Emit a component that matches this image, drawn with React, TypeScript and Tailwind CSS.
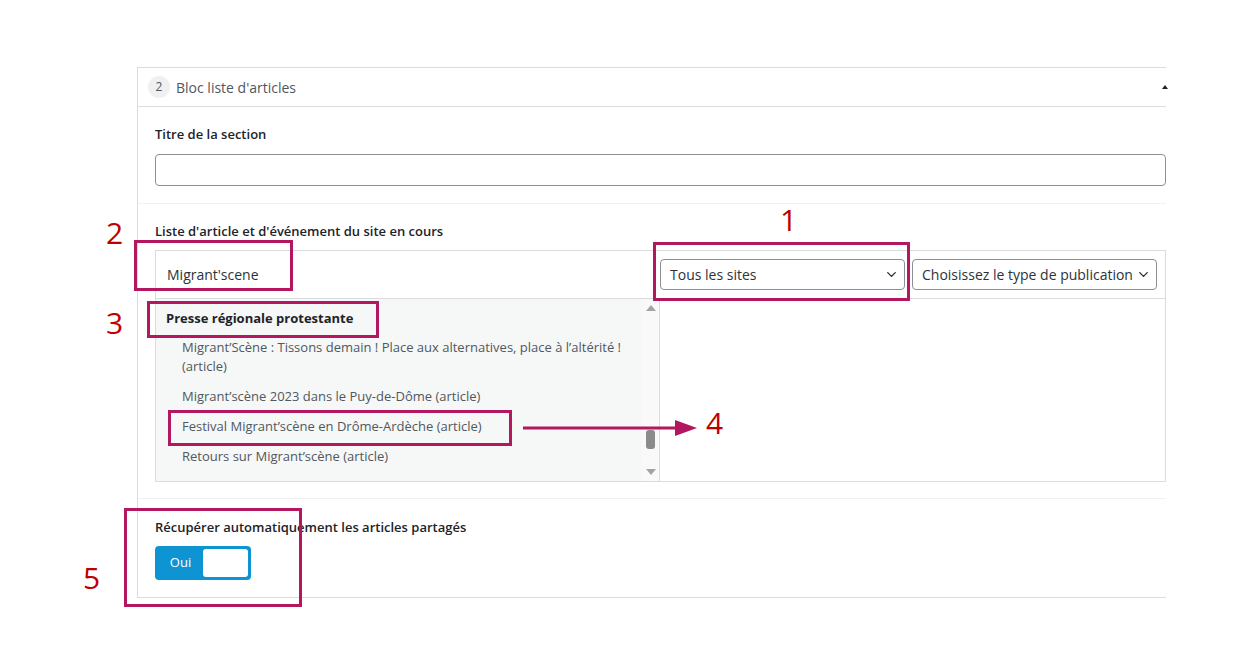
import { ChevronDown } from "lucide-react"

const articles = [
  "Migrant\u2019Scène : Tissons demain ! Place aux alternatives, place à l\u2019altérité ! (article)",
  "Migrant\u2019scène 2023 dans le Puy-de-Dôme (article)",
  "Festival Migrant\u2019scène en Drôme-Ardèche (article)",
  "Retours sur Migrant\u2019scène (article)",
]

function Select({ label }: { label: string }) {
  return (
    <div className="flex items-center justify-between w-[245px] h-[31px] border border-[#8c8f94] rounded-[4px] pl-[9px] pr-[5px] bg-white text-[14px] text-[#2c3338]">
      <span className="whitespace-nowrap overflow-hidden">{label}</span>
      <ChevronDown size={15} strokeWidth={2.25} className="shrink-0 text-[#2c3338]" />
    </div>
  )
}

function Annotations() {
  const box = "absolute border-[3px] border-[#b3175f]"
  const num = "absolute text-[30px] leading-none text-[#c00000]"
  return (
    <>
      <div className={box + " left-[653px] top-[242px] w-[257px] h-[59px]"} />
      <div className={box + " left-[134px] top-[240px] w-[159px] h-[51px]"} />
      <div className={box + " left-[147px] top-[301px] w-[232px] h-[37px]"} />
      <div className={box + " left-[168px] top-[410px] w-[344px] h-[36px]"} />
      <div className={box + " left-[124px] top-[508px] w-[178px] h-[99px]"} />
      <svg className="absolute left-[520px] top-[416px]" width="180" height="24" viewBox="0 0 180 24">
        <line x1="3" y1="12" x2="160" y2="12" stroke="#b3175f" strokeWidth="3" />
        <polygon points="155,4 177,12 155,20" fill="#b3175f" />
      </svg>
      <div className={num + " left-[780px] top-[205px]"}>1</div>
      <div className={num + " left-[106px] top-[218px]"}>2</div>
      <div className={num + " left-[106px] top-[308px]"}>3</div>
      <div className={num + " left-[706px] top-[408px]"}>4</div>
      <div className={num + " left-[83px] top-[563px]"}>5</div>
    </>
  )
}

function App() {
  return (
    <div className="relative w-[1242px] h-[667px] bg-white overflow-hidden font-['Open_Sans',sans-serif] text-[#3c434a]">
      <div className="pt-[67px] pl-[137px]">
        <div className="w-[1029px] border-l border-t border-b border-[#dcdcde]">
          {/* header */}
          <div className="flex items-center justify-between h-[39px] border-b border-[#dcdcde] pl-[10px]">
            <div className="flex items-center">
              <div className="w-[22px] h-[22px] rounded-full bg-[#f0f0f1] flex items-center justify-center text-[12px] text-[#50575e]">2</div>
              <span className="ml-[6px] text-[14px] text-[#50575e]">Bloc liste d'articles</span>
            </div>
            <div className="w-0 h-0 border-l-[3px] border-r-[3px] border-b-[4px] border-l-transparent border-r-transparent border-b-[#1d2327] mr-[-2px]" />
          </div>

          {/* titre */}
          <div className="pl-[17px] pt-[18px] pb-[17px] border-b border-[#f0f0f1]">
            <div className="text-[13px] font-semibold text-[#1d2327] leading-[18px]">Titre de la section</div>
            <div className="mt-[11px] w-[1011px] h-[32px] border border-[#8c8f94] rounded-[4px] bg-white" />
          </div>

          {/* liste */}
          <div className="pl-[17px] pt-[18px] pb-[16px] border-b border-[#f0f0f1]">
            <div className="text-[13px] font-semibold text-[#1d2327] leading-[18px]">Liste d'article et d'événement du site en cours</div>
            <div className="mt-[10px] w-[1011px] border border-[#dcdcde]">
              <div className="flex h-[48px] border-b border-[#dcdcde]">
                <div className="w-[504px] pl-[11px] flex items-center text-[14px] text-[#2c3338]">Migrant'scene</div>
                <div className="flex items-center gap-[7px]">
                  <Select label="Tous les sites" />
                  <Select label="Choisissez le type de publication" />
                </div>
              </div>
              <div className="flex h-[182px]">
                <div className="w-[504px] flex bg-[#f6f7f7] border-r border-[#dcdcde]">
                  <div className="flex-1 pl-[10px] pt-[10px] text-[13px] leading-[19px]">
                    <div className="font-bold text-[#1d2327]">Presse régionale protestante</div>
                    <div className="pl-[16px] pr-[4px] mt-[10px] flex flex-col gap-[11px] text-[#50575e]">
                      {articles.map((a) => (
                        <div key={a}>{a}</div>
                      ))}
                    </div>
                  </div>
                  <div className="w-[17px] bg-[#f9f9f9] flex flex-col items-center justify-between pt-[6px] pb-[6px]">
                    <div className="w-0 h-0 border-l-[5px] border-r-[5px] border-b-[6px] border-l-transparent border-r-transparent border-b-[#a3a3a3]" />
                    <div className="flex flex-col items-center gap-[20px]">
                      <div className="w-[9px] h-[19px] rounded-[3px] bg-[#8b8b8b]" />
                      <div className="w-0 h-0 border-l-[5px] border-r-[5px] border-t-[6px] border-l-transparent border-r-transparent border-t-[#a3a3a3]" />
                    </div>
                  </div>
                </div>
                <div className="flex-1 bg-white" />
              </div>
            </div>
          </div>

          {/* toggle */}
          <div className="pl-[17px] pt-[19px] pb-[17px]">
            <div className="text-[13px] font-semibold text-[#1d2327] leading-[18px]">Récupérer automatiquement les articles partagés</div>
            <div className="mt-[10px] flex items-center w-[96px] h-[34px] rounded-[4px] bg-[#0e93d3] p-[3px]">
              <span className="w-[45px] text-center text-[13px] text-white">Oui</span>
              <div className="flex-1 h-full rounded-[3px] bg-white" />
            </div>
          </div>
        </div>
      </div>
      <Annotations />
    </div>
  )
}

export default App
